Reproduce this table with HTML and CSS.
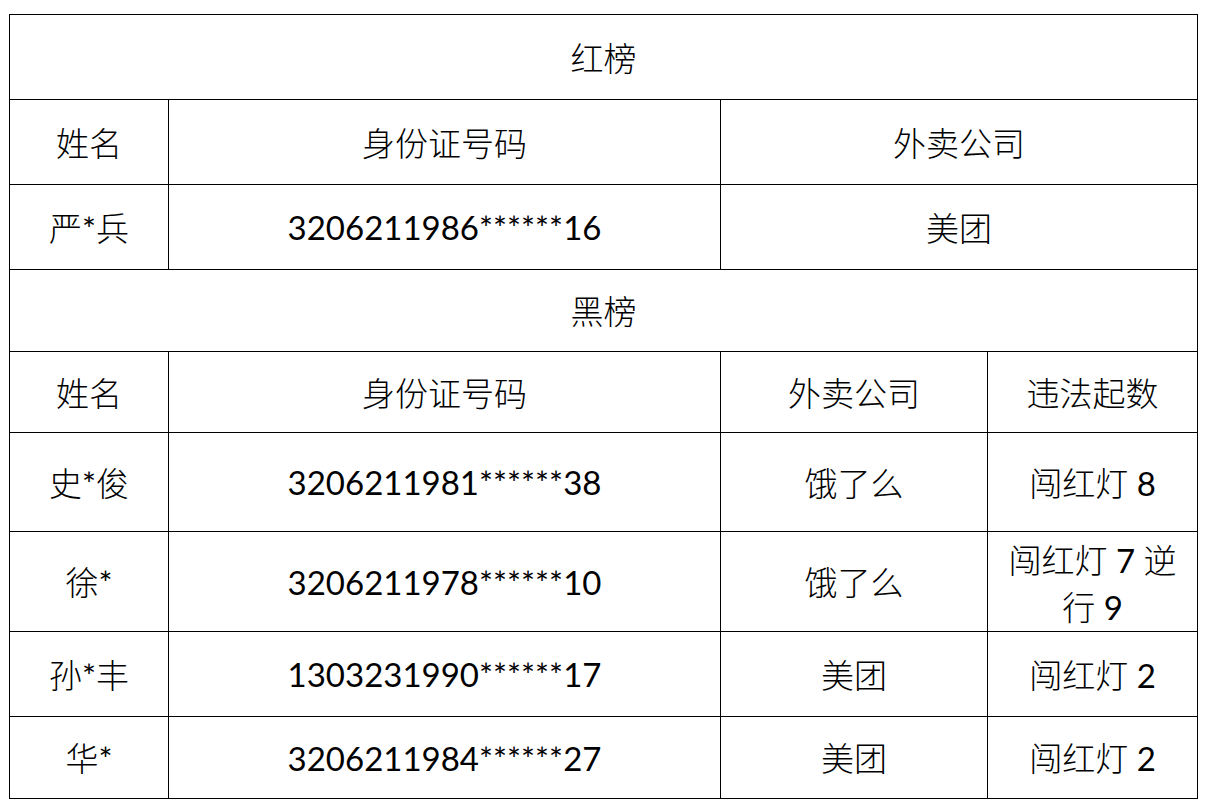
FILE: index.html
```html
<!DOCTYPE html>
<html lang="zh-CN">
<head>
<meta charset="utf-8">
<link rel="stylesheet" href="styles.css">
</head>
<body>
<div class="page">
<table class="sheet">
  <colgroup>
    <col class="c1"><col class="c2"><col class="c3"><col class="c4">
  </colgroup>
  <tr class="r-title"><td colspan="4"><span class="cj">红榜</span></td></tr>
  <tr class="r-85"><td><span class="cj">姓名</span></td><td><span class="cj">身份证号码</span></td><td colspan="2"><span class="cj">外卖公司</span></td></tr>
  <tr class="r-85"><td><span class="cj">严</span>*<span class="cj">兵</span></td><td>3206211986******16</td><td colspan="2"><span class="cj">美团</span></td></tr>
  <tr class="r-82"><td colspan="4"><span class="cj">黑榜</span></td></tr>
  <tr class="r-81"><td><span class="cj">姓名</span></td><td><span class="cj">身份证号码</span></td><td><span class="cj">外卖公司</span></td><td><span class="cj">违法起数</span></td></tr>
  <tr class="r-99"><td><span class="cj">史</span>*<span class="cj">俊</span></td><td>3206211981******38</td><td><span class="cj">饿了么</span></td><td><span class="cj">闯红灯</span> 8</td></tr>
  <tr class="r-100"><td><span class="cj">徐</span>*</td><td>3206211978******10</td><td><span class="cj">饿了么</span></td><td class="two"><span class="cj">闯红灯</span> 7 <span class="cj">逆</span><br><span class="cj">行</span> 9</td></tr>
  <tr class="r-85"><td><span class="cj">孙</span>*<span class="cj">丰</span></td><td>1303231990******17</td><td><span class="cj">美团</span></td><td><span class="cj">闯红灯</span> 2</td></tr>
  <tr class="r-82"><td><span class="cj">华</span>*</td><td>3206211984******27</td><td><span class="cj">美团</span></td><td><span class="cj">闯红灯</span> 2</td></tr>
</table>
</div>
</body>
</html>
```

FILE: styles.css
```css
html, body {
  margin: 0;
  padding: 0;
  background: #ffffff;
}
.page {
  padding: 14px 0 0 9px;
}
.sheet {
  border-collapse: collapse;
  table-layout: fixed;
  width: 1188px;
  font-family: "Lato", "Noto Sans CJK SC", sans-serif;
  font-size: 33px;
  color: #000;
}
.c1 { width: 159px; }
.c2 { width: 552px; }
.c3 { width: 267px; }
.c4 { width: 210px; }
.sheet td {
  border: 1px solid #000;
  text-align: center;
  vertical-align: middle;
  padding: 0 6px;
  line-height: 40px;
  font-weight: 400;
}
.cj {
  font-family: "Noto Sans CJK SC", sans-serif;
  font-weight: 300;
}
.sheet td.two {
  line-height: 46px;
  padding-top: 2px;
}
.r-title td { height: 84px; }
.r-85 td { height: 84px; }
.r-82 td { height: 81px; }
.r-81 td { height: 80px; }
.r-99 td { height: 98px; }
.r-100 td { height: 97px; }
```
